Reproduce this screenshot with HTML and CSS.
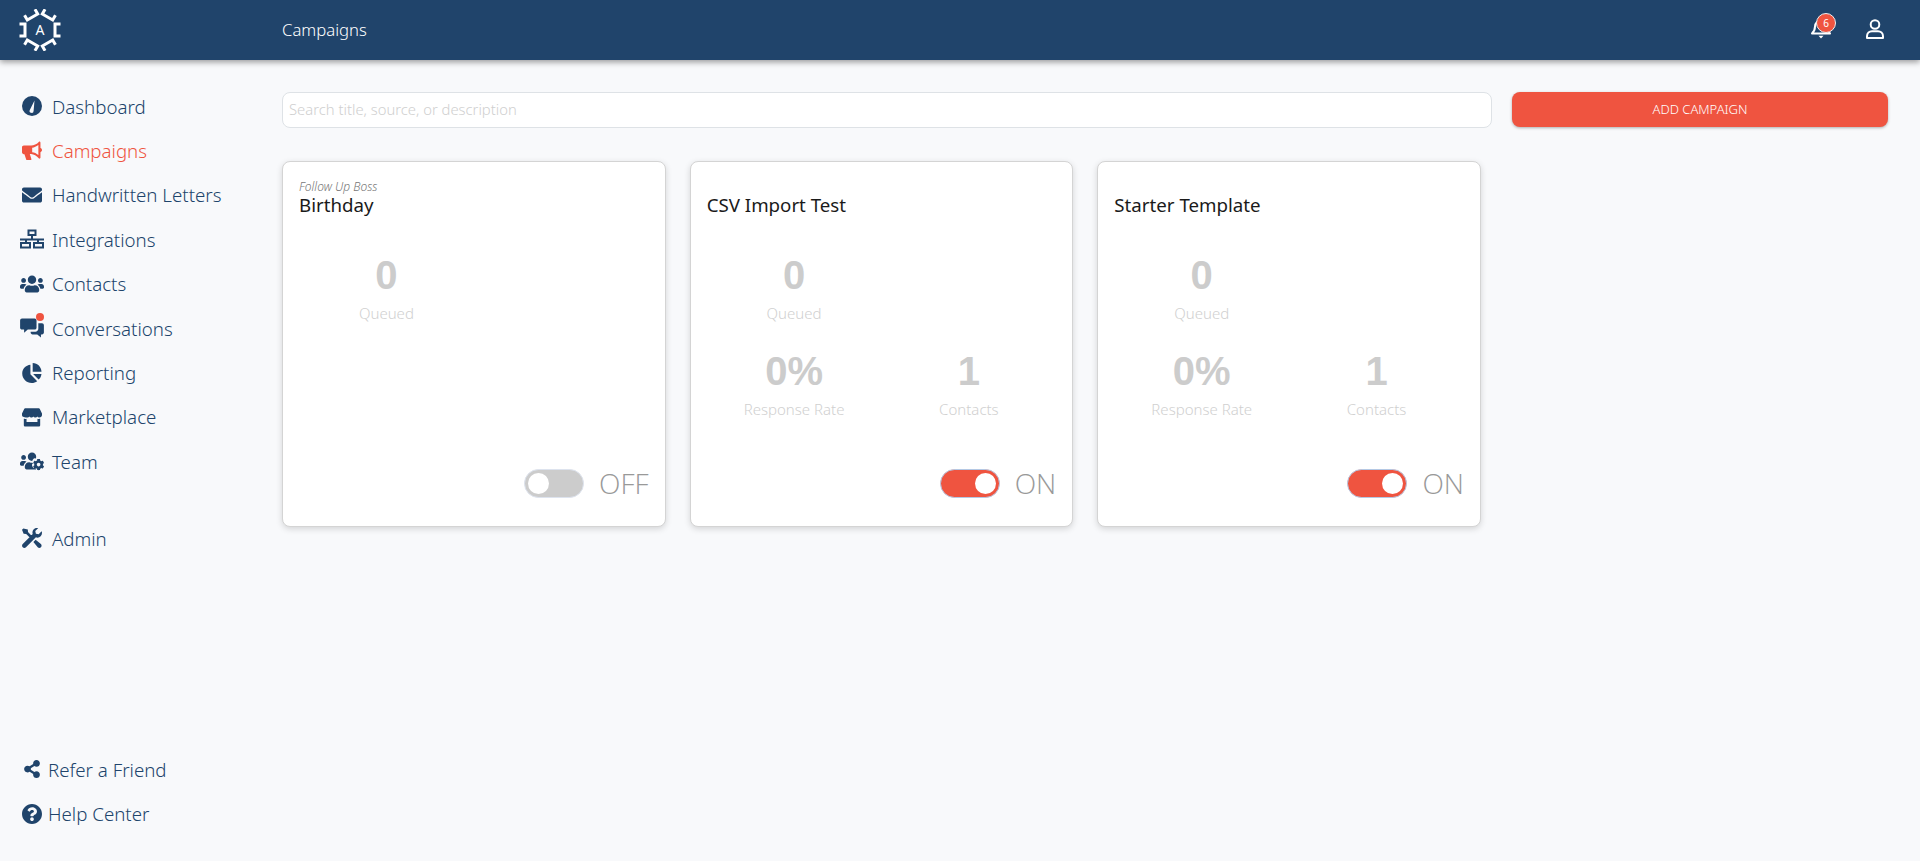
FILE: index.html
```html
<!DOCTYPE html>
<html lang="en">

<head>
    <meta charset="UTF-8">
    <meta name="viewport" content="width=device-width, initial-scale=1.0">
    <title>Campaigns</title>
    <link rel="stylesheet" href="styles.css">
</head>

<body>
    <header class="topbar">
        <div class="logo">
            <svg viewBox="-21 -21 42 42" width="42" height="42">
                <g fill="none" stroke="#fff" stroke-width="3">
                    <path d="M-20.500 -6H-15V6H-20.500" />
                    <path d="M-20.500 -6H-15V6H-20.500" transform="rotate(60)" />
                    <path d="M-20.500 -6H-15V6H-20.500" transform="rotate(120)" />
                    <path d="M-20.500 -6H-15V6H-20.500" transform="rotate(180)" />
                    <path d="M-20.500 -6H-15V6H-20.500" transform="rotate(240)" />
                    <path d="M-20.500 -6H-15V6H-20.500" transform="rotate(300)" />
                </g>
                <text class="logo-letter" x="0" y="5" text-anchor="middle">A</text>
            </svg>
        </div>
        <div class="page-title">Campaigns</div>
        <div class="top-icons">
            <div class="bell">
                <svg viewBox="0 0 24 24" width="24" height="24">
                    <path d="M3 15.500c1.800-1.800 3-3.300 3-7 0-3.200 2.800-6 6-6s6 2.800 6 6c0 3.700 1.200 5.200 3 7z" fill="none" stroke="#fff" stroke-width="2" stroke-linejoin="round" />
                    <path d="M9.500 17.800h5L12 20.500z" fill="#fff" />
                </svg>
                <span class="badge">6</span>
            </div>
            <svg viewBox="0 0 24 24" width="24" height="24">
                <circle cx="12" cy="6.500" r="4.300" fill="none" stroke="#fff" stroke-width="2" />
                <path d="M4 20v-1.800c0-3 2.400-5 5-5h6c2.600 0 5 2 5 5V20z" fill="none" stroke="#fff" stroke-width="2" stroke-linejoin="round" />
            </svg>
        </div>
    </header>

    <div class="layout">
        <aside class="sidebar">
            <nav class="menu">
                <a class="menu-item">
                    <svg viewBox="2 2 20 20"><circle cx="12" cy="12" r="10" /><path d="M9.800 16l4.700-9.500-.9 10.500a2 2 0 1 1-3.800-1z" fill="#f8f9fb" /></svg>
                    Dashboard
                </a>
                <a class="menu-item active">
                    <svg viewBox="1 1 22 22"><path d="M20 1.500c.8 0 1.300.6 1.300 1.300v5.900c1 .3 1.700 1.200 1.700 2.300s-.7 2-1.700 2.300v5.900c0 .7-.5 1.300-1.300 1.300-3-3.300-6-5-9-5.200H9.600l1.800 5.800c.1.500-.2.900-.7.900H6.400c-.4 0-.7-.2-.8-.6L3.700 15.500H3c-1.100 0-2-.9-2-2V8c0-1.100.9-2 2-2h8c3-.2 6-1.200 9-4.500zM19 5.500c-2.200 1.800-4.500 2.700-6.800 3v4.800c2.300.3 4.600 1.200 6.800 3z" fill-rule="evenodd" /></svg>
                    Campaigns
                </a>
                <a class="menu-item">
                    <svg viewBox="0 0 512 512"><path d="M502.300 190.800c3.900-3.100 9.700-.2 9.700 4.700V400c0 26.500-21.500 48-48 48H48c-26.500 0-48-21.500-48-48V195.600c0-5 5.700-7.800 9.700-4.700 22.400 17.400 52.100 39.500 154.100 113.600 21.100 15.400 56.700 47.800 92.200 47.600 35.700.3 72-32.800 92.300-47.600 102-74.100 131.600-96.300 154-113.700zM256 320c23.200.4 56.600-29.200 73.400-41.400 132.700-96.300 142.800-104.700 173.400-128.700 5.800-4.500 9.200-11.500 9.200-18.900v-19c0-26.500-21.500-48-48-48H48C21.500 64 0 85.500 0 112v19c0 7.400 3.400 14.300 9.200 18.900 30.600 23.900 40.700 32.400 173.400 128.700 16.800 12.200 50.200 41.800 73.400 41.400z" /></svg>
                    Handwritten Letters
                </a>
                <a class="menu-item">
                    <svg class="wide" viewBox="0 0 24 19"><path d="M7.500 0h9v6.500H13V9h11v2h-5v1.500h5V19H13v-6.500h4V11H7v1.500h4V19H0v-6.500h5V11H0V9h11V6.500H7.500zM9.500 2v2.500h5V2zM2 14.500V17h7v-2.500zM15 14.500V17h7v-2.500z" fill-rule="evenodd" /></svg>
                    Integrations
                </a>
                <a class="menu-item">
                    <svg class="wide" viewBox="0 0 640 512"><path d="M96 224c35.300 0 64-28.700 64-64s-28.700-64-64-64-64 28.700-64 64 28.700 64 64 64zm448 0c35.300 0 64-28.700 64-64s-28.700-64-64-64-64 28.700-64 64 28.700 64 64 64zm32 32h-64c-17.600 0-33.500 7.100-45.100 18.600 40.300 22.100 68.900 62 75.100 109.400h66c17.700 0 32-14.300 32-32v-32c0-35.300-28.700-64-64-64zm-256 0c61.900 0 112-50.100 112-112S381.900 32 320 32 208 82.100 208 144s50.100 112 112 112zm76.800 32h-8.300c-20.800 10-43.900 16-68.500 16s-47.600-6-68.500-16h-8.300C179.600 288 128 339.600 128 403.200V432c0 26.500 21.500 48 48 48h288c26.500 0 48-21.500 48-48v-28.800c0-63.600-51.600-115.200-115.200-115.200zm-223.700-13.400C161.500 263.100 145.600 256 128 256H64c-35.300 0-64 28.700-64 64v32c0 17.700 14.300 32 32 32h65.900c6.300-47.400 34.900-87.300 75.200-109.400z" /></svg>
                    Contacts
                </a>
                <a class="menu-item">
                    <span class="icon-wrap">
                        <svg class="wide" viewBox="0.700 3.500 22.600 19"><path d="M2.500 4h12c1 0 1.800.8 1.800 1.800v6.900c0 1-.8 1.800-1.800 1.800H8l-3.500 3v-3h-2c-1 0-1.800-.8-1.800-1.800V5.800C.7 4.800 1.500 4 2.500 4zM18 8.500h3.500c1 0 1.800.8 1.800 1.800v7c0 1-.8 1.800-1.800 1.800h-1v3l-3.500-3h-4.500c-1 0-1.800-.8-1.800-1.800v-.8h4.500c1.500 0 2.800-1.300 2.800-2.800z" /></svg>
                        <span class="dot"></span>
                    </span>
                    Conversations
                </a>
                <a class="menu-item">
                    <svg viewBox="1.500 1 21.500 22"><path d="M10.500 3v10.500l7.500 7.500c-1.800 1.300-3.900 2-6 2C6.200 23 1.500 18.300 1.500 12.500 1.500 7.400 5.400 3.500 10.500 3zM13 1c5.300 0 9.700 4.400 9.700 9.700H13zM13.500 13h9.200c-.3 2.400-1.400 4.700-3.200 6.200z" /></svg>
                    Reporting
                </a>
                <a class="menu-item">
                    <svg viewBox="1 1 22 22"><path d="M4.500 2.500h15c.5 0 .9.3 1.100.7L23 8.200v1.600c0 1.500-1.300 2.700-2.800 2.700-1 0-1.800-.5-2.200-1.100-.5.6-1.300 1.100-2.200 1.100s-1.800-.5-2.300-1.100c-.5.6-1.400 1.100-2.300 1.100s-1.700-.5-2.200-1.100c-.4.6-1.200 1.100-2.200 1.100C2.300 12.500 1 11.300 1 9.800V8.200l2.400-5c.2-.4.6-.7 1.100-.7zM3 14c.6.200 2.300.3 3 0v3.500h12V14c.7.300 2.400.2 3 0v7c0 .8-.7 1.500-1.500 1.500h-15C3.700 22.500 3 21.800 3 21z" /></svg>
                    Marketplace
                </a>
                <a class="menu-item">
                    <svg class="wide" viewBox="0 0 640 512"><path d="M610.500 373.300c2.600-14.100 2.600-28.500 0-42.600l25.800-14.900c3-1.700 4.300-5.200 3.300-8.500-6.700-21.600-18.200-41.200-33.200-57.400-2.300-2.500-6-3.100-9-1.400l-25.800 14.900c-10.900-9.300-23.400-16.500-36.900-21.300v-29.800c0-3.400-2.400-6.400-5.700-7.100-22.300-5-45-4.800-66.200 0-3.300.7-5.700 3.700-5.700 7.100v29.800c-13.500 4.800-26 12-36.900 21.300l-25.800-14.900c-2.900-1.700-6.700-1.100-9 1.400-15 16.200-26.500 35.800-33.200 57.400-1 3.300.4 6.800 3.300 8.500l25.800 14.900c-2.600 14.100-2.600 28.500 0 42.600l-25.800 14.900c-3 1.700-4.300 5.200-3.300 8.500 6.700 21.600 18.200 41.100 33.200 57.400 2.300 2.500 6 3.100 9 1.400l25.800-14.900c10.900 9.300 23.400 16.500 36.900 21.300v29.800c0 3.400 2.400 6.400 5.700 7.100 22.300 5 45 4.800 66.200 0 3.300-.7 5.700-3.700 5.700-7.100v-29.800c13.500-4.800 26-12 36.900-21.300l25.800 14.900c2.900 1.700 6.700 1.100 9-1.400 15-16.200 26.500-35.800 33.200-57.400 1-3.300-.4-6.800-3.300-8.500l-25.800-14.900zM496 400.500c-26.800 0-48.500-21.800-48.500-48.500s21.800-48.500 48.500-48.500 48.500 21.800 48.500 48.500-21.700 48.500-48.500 48.500zM96 224c35.300 0 64-28.700 64-64s-28.700-64-64-64-64 28.700-64 64 28.700 64 64 64zm224 32c1.900 0 3.700-.5 5.600-.6 8.300-21.700 20.500-42.100 36.300-59.200 7.400-8 17.900-12.600 28.900-12.600 6.900 0 13.700 1.800 19.600 5.300l7.900 4.600c.8-.5 1.600-.9 2.400-1.400 7-14.600 11.200-30.800 11.200-48 0-61.900-50.100-112-112-112S208 82.100 208 144c0 61.900 50.100 112 112 112zm105.200 194.500c-2.300-1.200-4.600-2.600-6.800-3.900-8.200 4.800-15.300 9.800-27.500 9.800-10.900 0-21.400-4.600-28.900-12.600-18.300-19.800-32.300-43.900-40.200-69.600-10.700-34.500 24.900-49.700 25.800-50.300-.1-2.600-.1-5.200 0-7.800l-7.900-4.600c-3.800-2.200-7-5-9.800-8.100-3.300.2-6.500.6-9.800.6-24.600 0-47.600-6-68.500-16h-8.300C179.600 288 128 339.600 128 403.200V432c0 26.500 21.500 48 48 48h255.400c-3.700-6-6.200-12.800-6.200-20.300v-9.200zM173.100 274.600C161.500 263.100 145.600 256 128 256H64c-35.300 0-64 28.700-64 64v32c0 17.700 14.300 32 32 32h65.900c6.300-47.400 34.900-87.300 75.200-109.400z" /></svg>
                    Team
                </a>
                <a class="menu-item admin">
                    <svg viewBox="1 1 22 22"><path d="M2.500 1.500l-1.500 1.500 1.800 4.300 2.800.2 5 5 2-2-5-5-.2-2.800zM17.500 1c-2.800 0-5 2.300-5 5 0 .6.100 1.200.3 1.700L1.800 18.600c-1 1-1 2.600 0 3.600s2.600 1 3.600 0l10.900-10.900c.5.200 1.100.3 1.700.3 2.800 0 5-2.200 5-5 0-.7-.1-1.300-.4-1.900l-3.300 3.300-3-.7-.7-3 3.300-3.300C18.800 1.100 18.200 1 17.500 1zM16 14l-2.500 2.500 4.800 5.700c1 1 2.500 1 3.500 0s1-2.500 0-3.500z" /></svg>
                    Admin
                </a>
            </nav>
            <nav class="menu-bottom">
                <a class="menu-item small">
                    <svg class="share" viewBox="0 0 448 512"><path d="M352 320c-22.608 0-43.387 7.819-59.790 20.895l-102.486-64.054a96.551 96.551 0 0 0 0-41.683l102.486-64.054C308.613 184.181 329.392 192 352 192c53.019 0 96-42.981 96-96S405.019 0 352 0s-96 42.981-96 96c0 7.158.79 14.130 2.276 20.841L155.790 180.895C139.387 167.819 118.608 160 96 160c-53.019 0-96 42.981-96 96s42.981 96 96 96c22.608 0 43.387-7.819 59.790-20.895l102.486 64.054A96.301 96.301 0 0 0 256 416c0 53.019 42.981 96 96 96s96-42.981 96-96-42.981-96-96-96z" /></svg>
                    Refer a Friend
                </a>
                <a class="menu-item small">
                    <svg viewBox="8 8 496 496"><path d="M504 256c0 136.997-111.043 248-248 248S8 392.997 8 256C8 119.083 119.043 8 256 8s248 111.083 248 248zM262.655 90c-54.497 0-89.255 22.957-116.549 63.758-3.536 5.286-2.353 12.415 2.715 16.258l34.699 26.310c5.205 3.947 12.621 3.008 16.665-2.122 17.864-22.658 30.113-35.797 57.303-35.797 20.429 0 45.698 13.148 45.698 32.958 0 14.976-12.363 22.667-32.534 33.976C247.128 238.528 216 254.941 216 296v4c0 6.627 5.373 12 12 12h56c6.627 0 12-5.373 12-12v-1.333c0-28.462 83.186-29.647 83.186-106.667 0-58.002-60.165-102-116.531-102zM256 338c-25.365 0-46 20.635-46 46 0 25.364 20.635 46 46 46s46-20.636 46-46c0-25.365-20.635-46-46-46z" /></svg>
                    Help Center
                </a>
            </nav>
        </aside>

        <main class="content">
            <div class="toolbar">
                <input class="search" type="text" placeholder="Search title, source, or description">
                <button class="add-btn">ADD CAMPAIGN</button>
            </div>

            <div class="cards">
                <div class="card">
                    <div class="card-source">Follow Up Boss</div>
                    <div class="card-title">Birthday</div>
                    <div class="stats">
                        <div class="stat">
                            <div class="stat-num">0</div>
                            <div class="stat-label">Queued</div>
                        </div>
                    </div>
                    <div class="card-foot">
                        <span class="switch"></span>
                        <span class="switch-text">OFF</span>
                    </div>
                </div>

                <div class="card">
                    <div class="card-source"></div>
                    <div class="card-title">CSV Import Test</div>
                    <div class="stats">
                        <div class="stat">
                            <div class="stat-num">0</div>
                            <div class="stat-label">Queued</div>
                        </div>
                        <div class="stat stat-first">
                            <div class="stat-num">0%</div>
                            <div class="stat-label">Response Rate</div>
                        </div>
                        <div class="stat">
                            <div class="stat-num">1</div>
                            <div class="stat-label">Contacts</div>
                        </div>
                    </div>
                    <div class="card-foot">
                        <span class="switch on"></span>
                        <span class="switch-text">ON</span>
                    </div>
                </div>

                <div class="card">
                    <div class="card-source"></div>
                    <div class="card-title">Starter Template</div>
                    <div class="stats">
                        <div class="stat">
                            <div class="stat-num">0</div>
                            <div class="stat-label">Queued</div>
                        </div>
                        <div class="stat stat-first">
                            <div class="stat-num">0%</div>
                            <div class="stat-label">Response Rate</div>
                        </div>
                        <div class="stat">
                            <div class="stat-num">1</div>
                            <div class="stat-label">Contacts</div>
                        </div>
                    </div>
                    <div class="card-foot">
                        <span class="switch on"></span>
                        <span class="switch-text">ON</span>
                    </div>
                </div>
            </div>
        </main>
    </div>
</body>

</html>
```

FILE: styles.css
```css
* {
    box-sizing: border-box;
}

html,
body {
    height: 100%;
}

body {
    margin: 0;
    display: flex;
    flex-direction: column;
    overflow: hidden;
    font-family: "Noto Sans", sans-serif;
    color: #20446b;
    background: #f8f9fb;
}

.topbar {
    position: relative;
    z-index: 2;
    display: flex;
    align-items: center;
    flex: none;
    height: 60px;
    padding-right: 33px;
    background: #20446b;
    box-shadow: 0 2px 6px rgba(0, 0, 0, .4);
}

.logo {
    display: flex;
    width: 282px;
    padding-left: 19px;
}

.logo-letter {
    font-family: "Noto Sans", sans-serif;
    font-size: 14px;
    fill: #fff;
}

.page-title {
    flex: 1;
    padding-bottom: 2px;
    font-size: 16.700px;
    font-weight: 300;
    color: #fff;
}

.top-icons {
    display: flex;
    align-items: center;
    gap: 30px;
}

.bell {
    position: relative;
    width: 24px;
    height: 24px;
}

.badge {
    position: absolute;
    top: -5px;
    left: 7px;
    width: 20px;
    height: 20px;
    border: 1px solid #eee;
    border-radius: 50%;
    font-size: 10px;
    line-height: 18px;
    text-align: center;
    color: #fff;
    background: #ef5440;
}

.layout {
    display: flex;
    flex: 1;
    min-height: 0;
}

.sidebar {
    display: flex;
    flex-direction: column;
    justify-content: space-between;
    flex: none;
    width: 282px;
    padding: 24px 0 25px;
}

.menu-item {
    display: flex;
    align-items: center;
    gap: 10px;
    height: 44.400px;
    padding-left: 22px;
    font-size: 18.700px;
    font-weight: 300;
    cursor: pointer;
}

.menu-item svg {
    flex: none;
    width: 20px;
    height: 20px;
    fill: #20446b;
}

.menu-item svg.wide {
    width: 24px;
    margin-left: -2px;
    margin-right: -2px;
}

.menu-item svg.share {
    height: 18px;
}

.menu-item.active {
    color: #ef5440;
}

.menu-item.active svg {
    fill: #ef5440;
}

.menu-item.admin {
    margin-top: 32.500px;
}

.menu-item.small {
    gap: 6px;
}

.icon-wrap {
    position: relative;
    display: flex;
    margin-left: -2px;
    margin-right: -2px;
}

.icon-wrap svg.wide {
    margin: 0;
}

.dot {
    position: absolute;
    top: -5px;
    right: 0;
    width: 8px;
    height: 8px;
    border-radius: 50%;
    background: #ef5440;
}

.content {
    flex: 1;
    padding: 32px 32px 0 0;
}

.toolbar {
    display: flex;
    align-items: flex-start;
    gap: 20px;
}

.search {
    flex: 1;
    height: 36px;
    padding: 0 6px 2px;
    border: 1px solid #dee2e6;
    border-radius: 8px;
    outline: none;
    font-family: inherit;
    font-size: 14.800px;
    font-weight: 300;
    background: #fff;
}

.search::placeholder {
    color: #cfcfcf;
}

.add-btn {
    width: 376px;
    height: 35px;
    padding: 0 0 2px;
    border: none;
    border-radius: 8px;
    font-family: inherit;
    font-size: 13px;
    font-weight: 300;
    color: #fff;
    background: #ef5440;
    box-shadow: 0 1px 3px rgba(0, 0, 0, .3);
    cursor: pointer;
}

.cards {
    display: flex;
    gap: 24px;
    margin-top: 33px;
}

.card {
    display: flex;
    flex-direction: column;
    width: 383.670px;
    height: 366px;
    padding: 17px 16px 28px;
    border: 1px solid #d4d4d4;
    border-radius: 8px;
    background: #fff;
    box-shadow: 0 2px 6px rgba(0, 0, 0, .15);
}

.card-source {
    height: 16px;
    font-size: 12px;
    font-style: italic;
    font-weight: 300;
    line-height: 16px;
    color: #777;
}

.card-title {
    font-size: 18.700px;
    line-height: 20px;
    color: #1a1a1a;
}

.stats {
    display: grid;
    grid-template-columns: 1fr 1fr;
    grid-auto-rows: 95.500px;
    margin-top: 34px;
}

.stat {
    text-align: center;
}

.stat-first {
    grid-column: 1;
}

.stat-num {
    height: 52px;
    font-family: "Liberation Sans", sans-serif;
    font-size: 40px;
    font-weight: 700;
    line-height: 52px;
    color: #ccc;
}

.stat-label {
    margin-top: 2px;
    font-size: 15px;
    font-weight: 300;
    line-height: 20px;
    color: #d0d0d0;
}

.card-foot {
    display: flex;
    align-items: center;
    justify-content: flex-end;
    gap: 15px;
    margin-top: auto;
}

.switch {
    position: relative;
    width: 60px;
    height: 29px;
    border: 1px solid #dde3ee;
    border-radius: 15px;
    background: #ccc;
}

.switch::after {
    content: "";
    position: absolute;
    top: 3px;
    left: 3px;
    width: 21px;
    height: 21px;
    border-radius: 50%;
    background: #fff;
}

.switch.on {
    border-color: #b4c8e4;
    background: #ef5440;
}

.switch.on::after {
    left: 34px;
}

.switch-text {
    font-family: "Open Sans", sans-serif;
    font-size: 28px;
    font-weight: 300;
    line-height: 30px;
    color: #999;
}
```
